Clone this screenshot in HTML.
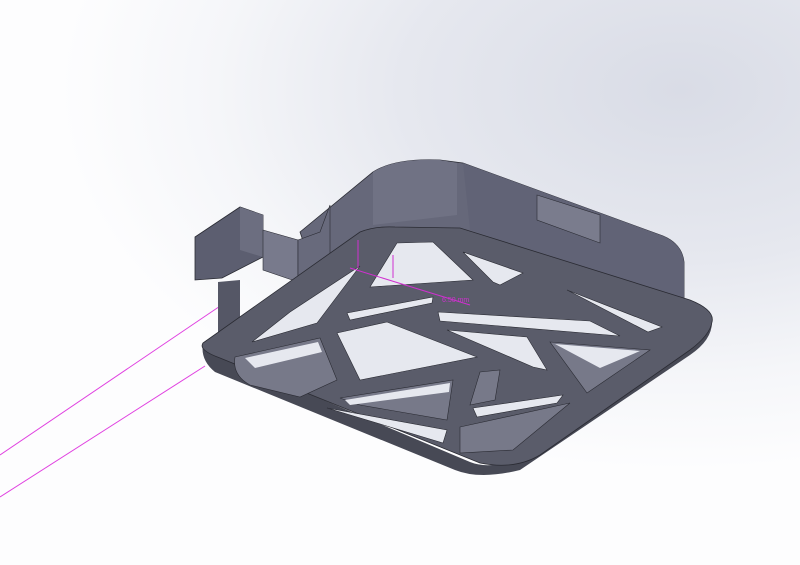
<!DOCTYPE html>
<html><head><meta charset="utf-8"><style>
html,body{margin:0;padding:0;width:800px;height:565px;overflow:hidden}
body{background:radial-gradient(ellipse 620px 380px at 680px 90px,#d9dce6 0%,#e6e8ef 45%,#f5f6f9 75%,#fdfdfe 100%)}
svg{position:absolute;left:0;top:0}
</style></head><body>
<svg width="800" height="565" viewBox="0 0 800 565">
<line x1="0" y1="455" x2="232" y2="298" stroke="#e040e0" stroke-width="1"/>
<line x1="0" y1="497" x2="205" y2="366" stroke="#e040e0" stroke-width="1"/>
<path d="M300,232 L373,172 Q395,158 440,160 L463,163 L663,236 Q682,244 684,262 L684,300 L560,350 L320,290 Z" fill="#66687a" stroke="#2a2b33" stroke-width="0.8"/>
<path d="M373,172 Q395,158 440,160 L457,163 L457,215 L373,225 Z" fill="#707284"/>
<path d="M463,163 L663,236 Q682,244 684,262 L684,300 L470,230 Z" fill="#616376"/>
<path d="M537,195 L600,215 L600,243 L537,220 Z" fill="#7a7c8d" stroke="#2a2b33" stroke-width="0.6"/>
<path d="M195,237 L240,207 L263,215 L263,257 L222,278 L195,280 Z" fill="#5c5e70" stroke="#2a2b33" stroke-width="0.8"/>
<path d="M240,207 L263,215 L263,257 L240,250 Z" fill="#6c6e80"/>
<path d="M263,230 L298,240 L298,282 L263,270 Z" fill="#787a8c" stroke="#2a2b33" stroke-width="0.6"/>
<path d="M298,240 L320,232 L330,205 L330,262 L298,282 Z" fill="#686a7c" stroke="#2a2b33" stroke-width="0.6"/>
<path d="M218,282 L240,280 L240,330 L218,345 Z" fill="#555766"/>
<path d="M203,343 Q200,360 215,372 L455,470 Q480,480 520,470 L690,355 Q712,340 712,322 L700,323 L520,458 Q490,470 470,462 L210,352 Z" fill="#474955"/>
<path d="M203,343 L360,232 Q375,226 395,227 L460,228 L690,300 Q715,310 712,322 Q710,335 690,350 L540,455 Q515,470 480,463 L220,358 Q198,350 203,343 Z" fill="#5a5c6a" stroke="#2a2b33" stroke-width="0.8"/>
<g fill="#e6e8ef" stroke="#2a2b33" stroke-width="0.6">
<path d="M397,243 L433,242 L473,280 L370,287 Z"/>
<path d="M463,252 L523,273 L500,285 L493,282 Z"/>
<path d="M360,266 L317,323 L252,342 L290,312 Z"/>
<path d="M347,313 L433,297 L432,303 L350,320 Z"/>
<path d="M337,333 L387,322 L477,357 L360,380 Z"/>
<path d="M438,312 L590,321 L620,336 L440,321 Z"/>
<path d="M447,330 L527,337 L547,370 L533,367 Z"/>
<path d="M567,290 L662,327 L648,332 Z"/>
<path d="M473,408 L563,395 L557,403 L477,417 Z"/>
<path d="M327,408 L447,430 L443,443 Z"/>
</g>
<g fill="#777989" stroke="#2a2b33" stroke-width="0.6">
<path d="M235,357 L320,338 L337,380 L300,397 L250,385 Q232,375 235,357 Z"/>
<path d="M550,342 L650,350 L587,393 Z"/>
<path d="M340,398 L453,380 L447,420 L360,405 Z"/>
<path d="M460,427 L570,403 L513,450 L460,453 Z"/>
<path d="M480,372 L500,370 L495,400 L470,405 Z"/>
</g>
<g fill="#e6e8ef">
<path d="M245,358 L318,342 L322,352 L255,368 Z"/>
<path d="M345,400 L450,383 L449,392 L350,405 Z"/>
<path d="M555,344 L640,351 L600,368 Z"/>
</g>
<g stroke="#d030d0" stroke-width="1" fill="none">
<line x1="358" y1="240" x2="358" y2="268"/>
<line x1="393" y1="255" x2="393" y2="278"/>
<line x1="350" y1="268" x2="470" y2="305"/>
</g>
<text x="442" y="302" font-family="Liberation Sans,sans-serif" font-size="7" fill="#d030d0">6.50 mm</text>
</svg>
</body></html>
